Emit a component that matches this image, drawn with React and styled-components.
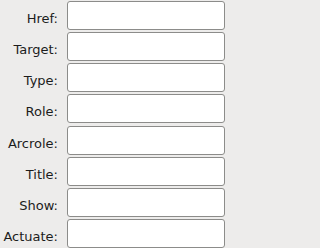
import React from "react";
import styled, { createGlobalStyle } from "styled-components";

const Global = createGlobalStyle`
  html, body { margin: 0; padding: 0; background: #edeceb; }
  body { font-family: "DejaVu Sans", sans-serif; }
`;

const Form = styled.div`
  display: grid;
  grid-template-columns: 58px 158px;
  column-gap: 9px;
  row-gap: 2px;
  padding-top: 1px;
  width: 230px;
  height: 248px;
  box-sizing: border-box;
  background: #edeceb;
`;

const Label = styled.label`
  justify-self: end;
  align-self: start;
  margin-top: 10px;
  font-family: "DejaVu Sans", sans-serif;
  font-size: 13px;
  line-height: 15px;
  color: #1c1c1c;
  white-space: nowrap;
`;

const Field = styled.input`
  box-sizing: border-box;
  width: 158px;
  height: 29px;
  margin: 0;
  padding: 0 6px;
  border: 1px solid #8c8c8a;
  border-radius: 3px;
  background: #ffffff;
  font-family: "DejaVu Sans", sans-serif;
  font-size: 13px;
  outline: none;
`;

const fields = ["Href", "Target", "Type", "Role", "Arcrole", "Title", "Show", "Actuate"];

export default function App() {
  return (
    <>
      <Global />
      <Form>
        {fields.map((f) => (
          <React.Fragment key={f}>
            <Label>{f}:</Label>
            <Field type="text" />
          </React.Fragment>
        ))}
      </Form>
    </>
  );
}
